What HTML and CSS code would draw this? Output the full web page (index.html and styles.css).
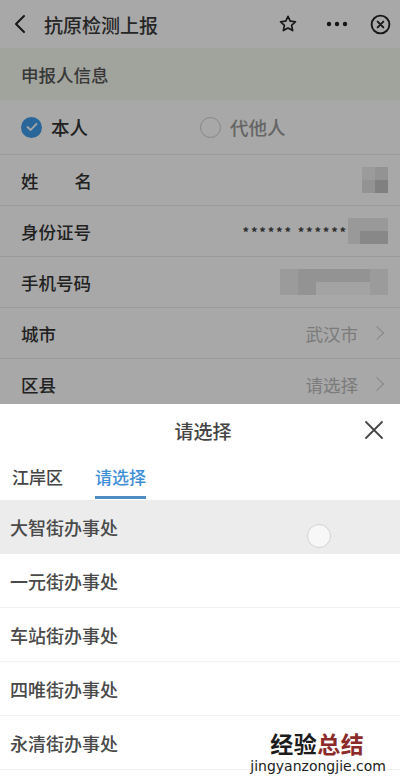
FILE: index.html
```html
<!DOCTYPE html>
<html lang="zh-CN">
<head>
  <meta charset="UTF-8" />
  <title>抗原检测上报</title>
  <link rel="stylesheet" href="styles.css">
</head>
<body>

  <div class="page">
    <div class="topbar">
      <svg class="back" width="12" height="20" viewBox="0 0 12 20"><path d="M10 2 L2 10 L10 18" fill="none" stroke="#222" stroke-width="2" stroke-linecap="round" stroke-linejoin="round"/></svg>
      <div class="title">抗原检测上报</div>
      <svg class="star" width="20" height="20" viewBox="0 0 24 24"><path d="M12 2.8 L14.7 8.6 L21 9.3 L16.3 13.6 L17.6 19.9 L12 16.7 L6.4 19.9 L7.7 13.6 L3 9.3 L9.3 8.6 Z" fill="none" stroke="#222" stroke-width="2" stroke-linejoin="round"/></svg>
      <svg class="more" width="22" height="6" viewBox="0 0 22 6"><circle cx="3" cy="3" r="2.2" fill="#222"/><circle cx="11" cy="3" r="2.2" fill="#222"/><circle cx="19" cy="3" r="2.2" fill="#222"/></svg>
      <svg class="quit" width="21" height="21" viewBox="0 0 22 22"><circle cx="11" cy="11" r="9.3" fill="none" stroke="#222" stroke-width="2"/><path d="M8 8 L14 14 M14 8 L8 14" stroke="#222" stroke-width="2" stroke-linecap="round"/></svg>
    </div>

    <div class="section-title">申报人信息</div>

    <div class="radio-row">
      <label class="radio on">
        <span class="dot">
          <svg width="12" height="10" viewBox="0 0 12 10"><path d="M1.5 5 L4.7 8 L10.5 1.8" fill="none" stroke="#fff" stroke-width="1.8" stroke-linecap="round" stroke-linejoin="round"/></svg>
        </span>
        本人
      </label>
      <label class="radio">
        <span class="dot"></span>
        代他人
      </label>
    </div>

    <div class="field">
      <span class="label name-label"><span>姓</span><span>名</span></span>
      <span class="mosaic m-name">
        <i class="c1"></i><i class="c2"></i><i class="c2"></i><i class="c3"></i>
      </span>
    </div>
    <div class="field">
      <span class="label">身份证号</span>
      <span class="value-id">
        <span class="stars">****** ******</span>
        <span class="mosaic m-id"><i class="c2"></i><i class="c3"></i></span>
      </span>
    </div>
    <div class="field">
      <span class="label">手机号码</span>
      <span class="mosaic m-phone">
        <i class="c1"></i><i class="c2"></i><i class="c2"></i><i class="c2"></i><i class="c2"></i><i class="c1"></i>
        <i class="c1"></i><i class="c2"></i><i class="c0"></i><i class="c0"></i><i class="c0"></i><i class="c1"></i>
      </span>
    </div>
    <div class="field">
      <span class="label">城市</span>
      <span class="value">武汉市 <span class="arrow"></span></span>
    </div>
    <div class="field">
      <span class="label">区县</span>
      <span class="value">请选择 <span class="arrow"></span></span>
    </div>
    <div class="field">
      <span class="label">街道</span>
      <span class="value">请选择 <span class="arrow"></span></span>
    </div>
  </div>

  <div class="mask"></div>

  <div class="sheet">
    <div class="sheet-head">
      <span></span>
      <div class="sheet-title">请选择</div>
      <svg class="sheet-close" width="20" height="20" viewBox="0 0 20 20"><path d="M2 2 L18 18 M18 2 L2 18" stroke="#444" stroke-width="1.8" stroke-linecap="round"/></svg>
    </div>
    <div class="tabs">
      <span class="tab">江岸区</span>
      <span class="tab active">请选择</span>
    </div>
    <ul class="options">
      <li class="pressed">大智街办事处<span class="touch"></span></li>
      <li>一元街办事处</li>
      <li>车站街办事处</li>
      <li>四唯街办事处</li>
      <li>永清街办事处</li>
    </ul>
    <div class="watermark">
      <div class="wm-big">经验<em>总结</em></div>
      <div class="wm-small">jingyanzongjie.com</div>
    </div>
  </div>

</body>
</html>
```

FILE: styles.css
```css
body {
  margin: 0;
  font-family: "Noto Sans CJK SC", "Noto Sans", sans-serif;
  color: #444;
  background: #fff;
  overflow: hidden;
}
.page {
  background: #fff;
}
.topbar {
  height: 48px;
  display: flex;
  align-items: center;
  padding: 0 9px 0 14px;
  background: #fff;
}
.back {
  margin-right: 18px;
}
.title {
  flex: 1;
  font-size: 19px;
  font-weight: 500;
  color: #3a3a3a;
  line-height: 1;
}
.star {
  margin-right: 28px;
}
.more {
  margin-right: 22px;
}
.section-title {
  height: 52px;
  display: flex;
  align-items: center;
  padding-left: 21px;
  font-size: 17.5px;
  font-weight: 500;
  color: #555;
  background: #f4f7ef;
}
.radio-row {
  height: 54px;
  display: flex;
  align-items: center;
  padding: 0 21px;
  border-bottom: 1px solid #ececec;
}
.radio {
  display: flex;
  align-items: center;
  gap: 9px;
  font-size: 18.5px;
  font-weight: 500;
  color: #333;
  width: 185px;
}
.radio + .radio {
  color: #999;
}
.radio .dot {
  width: 19px;
  height: 19px;
  border-radius: 50%;
  border: 1.5px solid #ccc;
  display: flex;
  align-items: center;
  justify-content: center;
}
.radio.on .dot {
  background: #3f9cea;
  border-color: #3f9cea;
  width: 21px;
  height: 21px;
  border-width: 0;
}
.field {
  height: 50px;
  display: flex;
  align-items: center;
  justify-content: space-between;
  padding: 0 12px 0 21px;
  border-bottom: 1px solid #ececec;
}
.label {
  font-size: 17.5px;
  font-weight: 500;
  color: #333;
}
.name-label {
  display: flex;
  justify-content: space-between;
  width: 71px;
}
.value {
  font-size: 17.5px;
  color: #bbb;
  display: flex;
  align-items: center;
  gap: 14px;
}
.arrow {
  width: 9px;
  height: 9px;
  border-top: 1.5px solid #ccc;
  border-right: 1.5px solid #ccc;
  transform: rotate(45deg);
  margin-right: 6px;
}
.value-id {
  display: flex;
  align-items: center;
}
.stars {
  font-size: 13px;
  color: #444;
  font-weight: bold;
  letter-spacing: 1.8px;
}
.mosaic {
  display: grid;
}
.mosaic i {
  display: block;
}
.mosaic .c0 { background: #f8f8f8; }
.mosaic .c1 { background: #ececec; }
.mosaic .c2 { background: #e0e0e0; }
.mosaic .c3 { background: #c2c2c2; }
.m-name {
  grid-template-columns: 13px 13px;
  grid-auto-rows: 13px;
}
.m-id {
  grid-template-columns: 12px 28px;
  grid-auto-rows: 26px;
}
.m-id .c2 { background: #e8e8e8; }
.m-id .c3 { background: linear-gradient(#e9e9e9 50%, #cfcfcf 50%); }
.m-phone {
  grid-template-columns: repeat(6, 18px);
  grid-auto-rows: 13px;
}
.mask {
  position: fixed;
  left: 0;
  top: 0;
  right: 0;
  bottom: 0;
  background: rgba(0, 0, 0, 0.34);
}
.sheet {
  position: fixed;
  left: 0;
  right: 0;
  bottom: 0;
  height: 375px;
  background: #fff;
  overflow: hidden;
}
.sheet-head {
  height: 52px;
  display: grid;
  grid-template-columns: 40px 1fr 40px;
  align-items: center;
}
.sheet-title {
  text-align: center;
  font-size: 19px;
  font-weight: 500;
  color: #444;
  line-height: 1;
  padding-left: 6px;
}
.sheet-close {
  justify-self: start;
  margin-left: 4px;
}
.tabs {
  height: 43px;
  display: flex;
  align-items: flex-end;
  padding-left: 12px;
  gap: 32px;
  border-bottom: 1px solid #fff;
}
.tab {
  font-size: 17px;
  font-weight: 500;
  color: #444;
  line-height: 1;
  padding-bottom: 11px;
  border-bottom: 3px solid transparent;
}
.tab.active {
  color: #3f8fd6;
  border-bottom-color: #4f8cc4;
}
.options {
  list-style: none;
  margin: 0;
  padding: 0;
}
.options li {
  position: relative;
  height: 53px;
  display: flex;
  align-items: center;
  padding-left: 10px;
  font-size: 18px;
  font-weight: 500;
  color: #4a4a4a;
  border-bottom: 1px solid #f2f2f2;
}
.options li.pressed {
  background: #ececec;
  border-bottom-color: #ececec;
}
.touch {
  position: absolute;
  left: 307px;
  top: 24px;
  width: 22px;
  height: 22px;
  border-radius: 50%;
  background: #f7f7f7;
  border: 1.5px solid #d2d2d2;
}
.watermark {
  position: absolute;
  right: 14px;
  bottom: 6px;
  text-align: center;
  line-height: 1;
}
.wm-big {
  font-size: 23px;
  font-weight: bold;
  color: #1c1c1c;
  letter-spacing: 0.5px;
  margin-right: 2px;
}
.wm-big em {
  font-style: normal;
  color: #8c2a2a;
}
.wm-small {
  margin-top: 4px;
  font-family: "DejaVu Sans", sans-serif;
  font-size: 14px;
  color: #222;
}
```
